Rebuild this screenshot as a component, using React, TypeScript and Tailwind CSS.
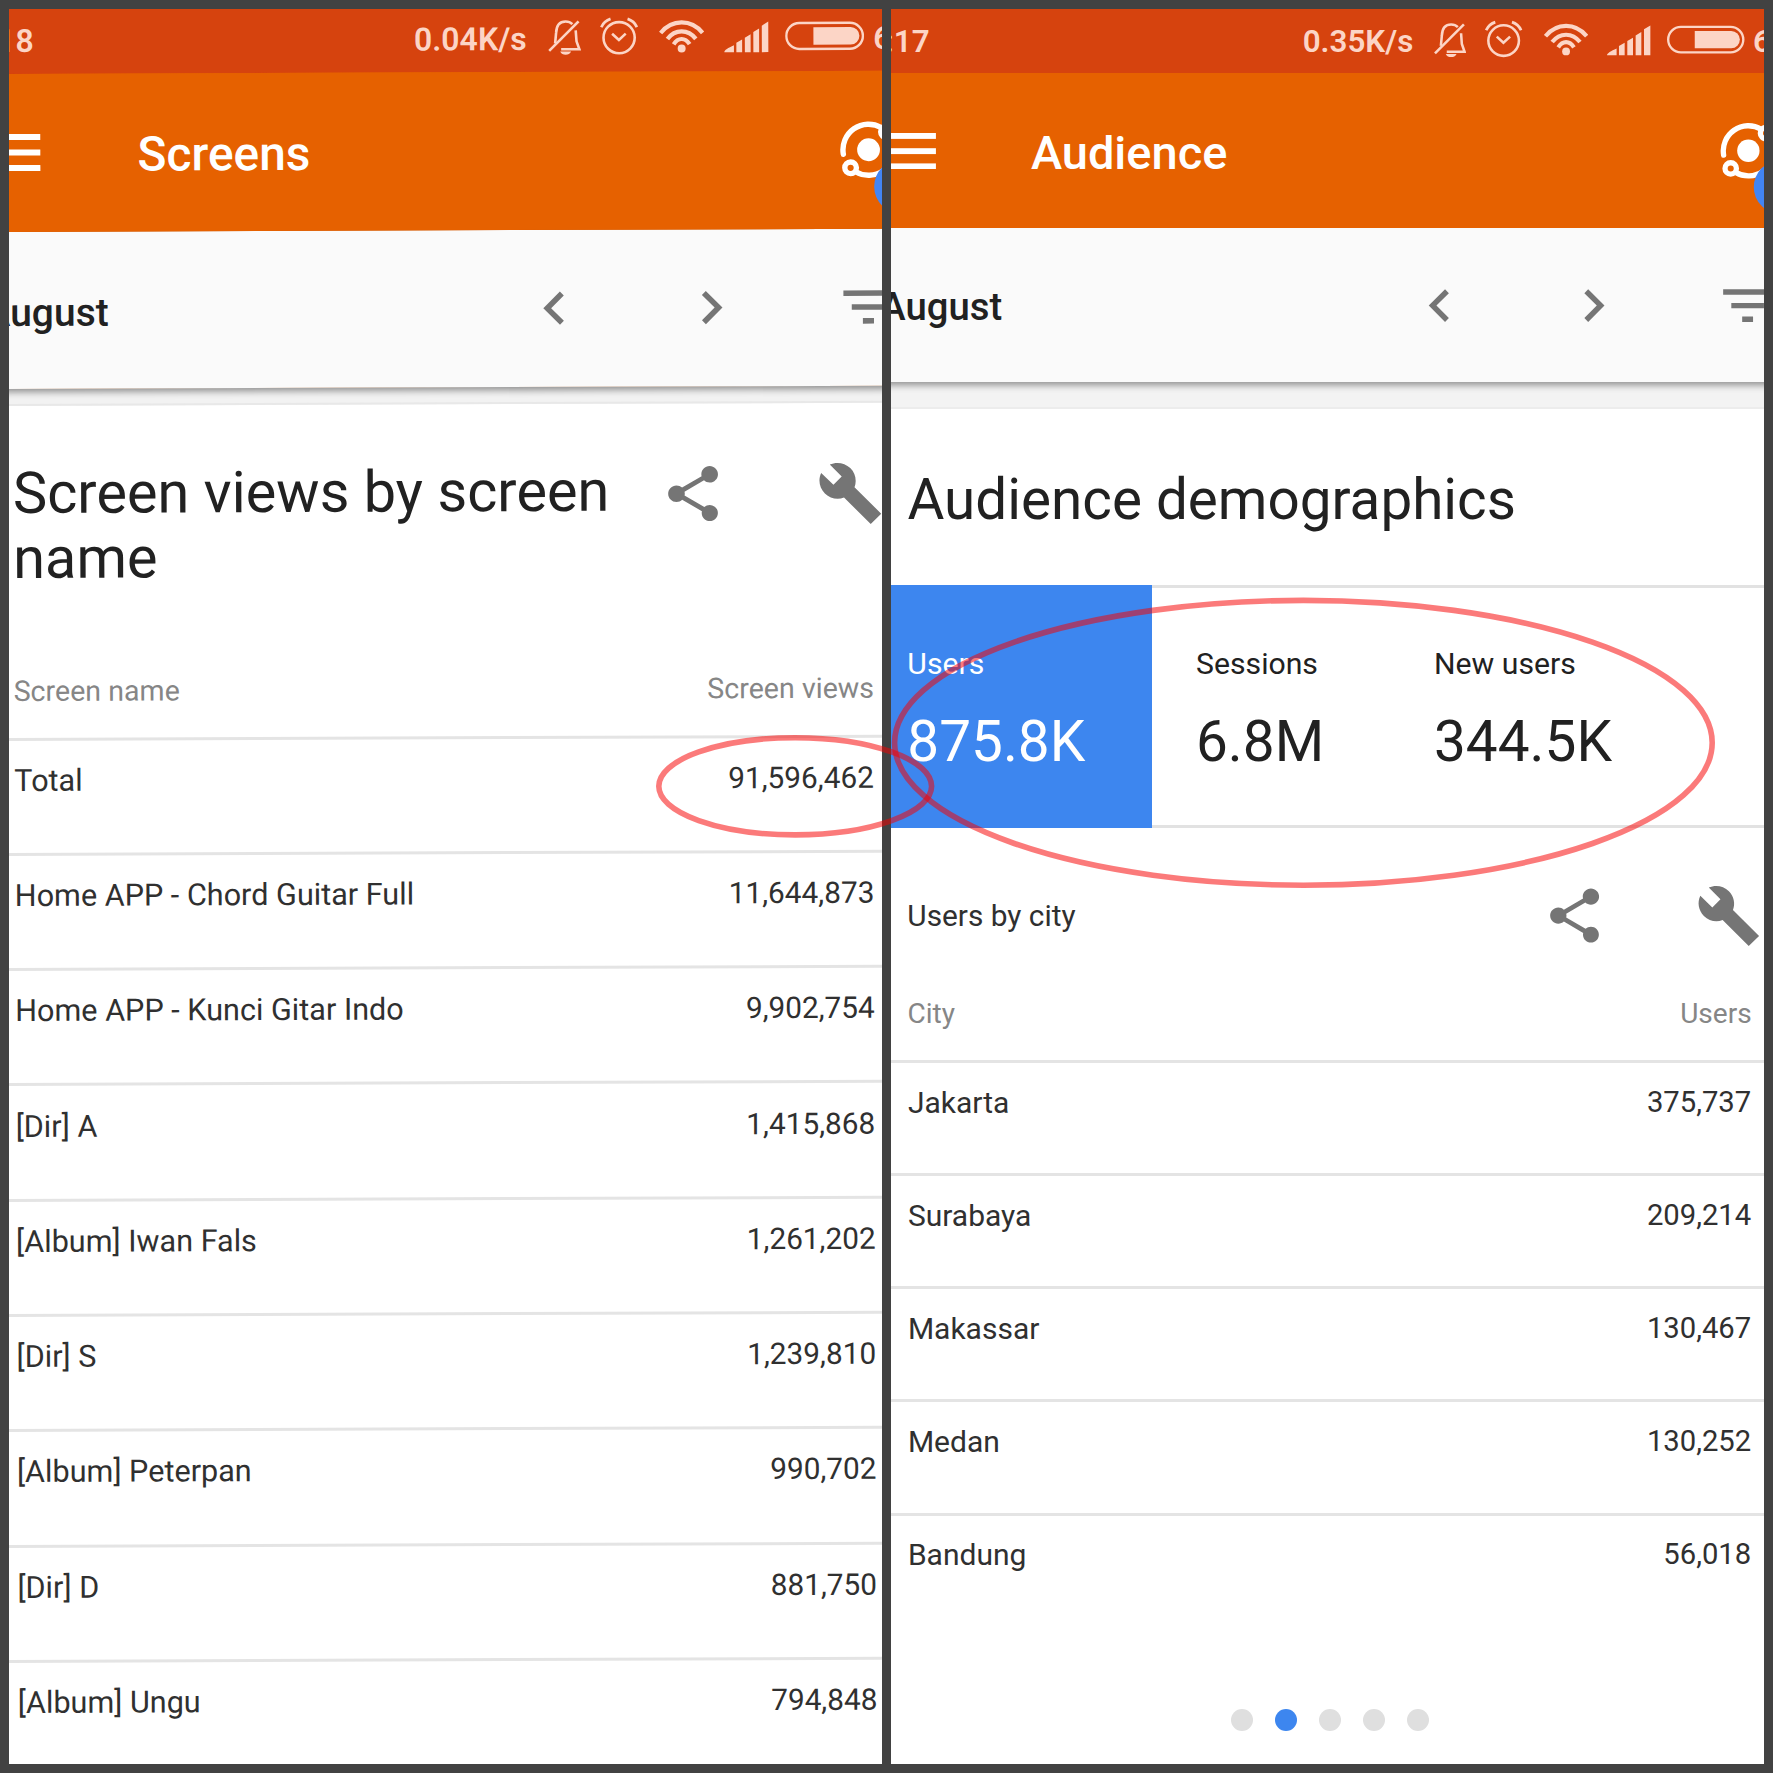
import React from "react";

type Row = [string, string];

const screenRows: Row[] = [
  ["Total", "91,596,462"],
  ["Home APP - Chord Guitar Full", "11,644,873"],
  ["Home APP - Kunci Gitar Indo", "9,902,754"],
  ["[Dir] A", "1,415,868"],
  ["[Album] Iwan Fals", "1,261,202"],
  ["[Dir] S", "1,239,810"],
  ["[Album] Peterpan", "990,702"],
  ["[Dir] D", "881,750"],
  ["[Album] Ungu", "794,848"],
];

const cityRows: Row[] = [
  ["Jakarta", "375,737"],
  ["Surabaya", "209,214"],
  ["Makassar", "130,467"],
  ["Medan", "130,252"],
  ["Bandung", "56,018"],
];

const BellOff = () => (
  <svg viewBox="0 0 33 40" fill="none" stroke="currentColor" strokeWidth="2.6" className="ml-[calc(18.4*var(--u))] h-[calc(40*var(--u))] w-[calc(33*var(--u))] shrink-0">
    <path d="M1 34 30.5 4.5" />
    <path d="M7 26.5 8 16C8.3 8.5 12 4.6 17.5 4.6c2.8 0 5 .8 6.8 2.6M27.6 13.5l.8 11 2.8 7.9H13" />
    <path d="M12 34.6h11c-1.2 2.4-3 3.2-5.5 3.2S13 37 12 34.6z" fill="currentColor" stroke="none" />
  </svg>
);

const Alarm = () => (
  <svg viewBox="0 0 38 40" fill="none" stroke="currentColor" className="ml-[calc(19.3*var(--u))] h-[calc(40*var(--u))] w-[calc(38*var(--u))] shrink-0">
    <circle cx="19" cy="21" r="15.6" strokeWidth="2.6" />
    <path d="M12 17l6.8 6.2L25.6 17" strokeWidth="2.6" />
    <path d="M1.2 10.5C3 6.5 6 3.6 10.5 2.2M27.5 2.2C32 3.6 35 6.5 36.8 10.5" strokeWidth="2.8" />
  </svg>
);

const Wifi = () => (
  <svg viewBox="0 0 45 40" fill="none" stroke="currentColor" strokeWidth="4.2" className="ml-[calc(21.5*var(--u))] h-[calc(40*var(--u))] w-[calc(45*var(--u))] shrink-0">
    <path d="M1.500 16.500C13 2.500 32 2.500 43.500 16.500" />
    <path d="M8.300 22.500C16 12.500 29 12.500 36.700 22.500" />
    <path d="M14.500 27.800C19 20.800 26 20.800 30.500 27.800" />
    <circle cx="22.5" cy="32" r="4" fill="currentColor" stroke="none" />
  </svg>
);

const Signal = () => (
  <svg viewBox="0 0 45 40" fill="currentColor" className="ml-[calc(20*var(--u))] h-[calc(40*var(--u))] w-[calc(45*var(--u))] shrink-0">
    <path d="M0 36c0-2 4-4.500 9.800-7v7zM12.200 26.500l5.800-3.300V36h-5.800zM20.700 21.500l5.800-3.500V36h-5.800zM29.200 15.800l5.800-3.500V36h-5.800zM37.700 9.500l6.500-4V36h-6.500z" />
  </svg>
);

const Battery = () => (
  <svg viewBox="0 0 79 40" fill="none" className="ml-[calc(16*var(--u))] h-[calc(40*var(--u))] w-[calc(79*var(--u))] shrink-0">
    <rect x="1.2" y="7" width="76.6" height="26" rx="13" stroke="currentColor" strokeWidth="2.4" />
    <path d="M28.300 11.200H65.500a8.800 8.800 0 0 1 0 17.600H28.300z" fill="currentColor" />
  </svg>
);

const Burger = () => (
  <svg viewBox="0 0 56 37" className="h-[calc(37*var(--u))] w-[calc(56*var(--u))] shrink-0 fill-white">
    <rect width="56" height="6" />
    <rect y="15.5" width="56" height="6" />
    <rect y="31" width="56" height="6" />
  </svg>
);

const RealTime = () => (
  <svg viewBox="-33 -64 94 128" fill="none" className="ml-auto h-[calc(128*var(--u))] w-[calc(94*var(--u))] shrink-0">
    <path d="M-25.200 4.500A25.600 25.600 0 0 1 13 -22" stroke="#fff" strokeWidth="5.4" strokeLinecap="round" />
    <path d="M-13 22A25.600 25.600 0 0 0 25.200 -4.500" stroke="#fff" strokeWidth="5.4" />
    <circle r="11.4" fill="#fff" />
    <circle cx="-18" cy="18" r="5.8" stroke="#fff" strokeWidth="5.4" fill="#e66100" />
    <circle cx="18" cy="-18" r="5.8" stroke="#fff" strokeWidth="5.4" fill="#e66100" />
    <circle cx="32.5" cy="37" r="27" fill="#4285f4" />
  </svg>
);

const Glyph = ({ d }: { d: string }) => (
  <svg viewBox="0 0 24 24" className="size-[calc(66.5*var(--u))] shrink-0 fill-[#757575]">
    <path d={d} />
  </svg>
);

const LEFT = "M15.410 7.410 14 6l-6 6 6 6 1.410-1.410L10.830 12z";
const RIGHT = "M10 6 8.590 7.410 13.170 12l-4.580 4.590L10 18l6-6z";
const FILTER = "M10 18h4v-2h-4v2zM3 6v2h18V6H3zm3 7h12v-2H6v2z";
const SHARE =
  "M18 16.080c-.76 0-1.440.3-1.960.77L8.910 12.700c.05-.23.09-.46.09-.7s-.04-.47-.09-.7l7.050-4.110c.54.5 1.250.81 2.040.81 1.660 0 3-1.340 3-3s-1.340-3-3-3-3 1.340-3 3c0 .24.04.47.09.7L8.040 9.810C7.500 9.310 6.790 9 6 9c-1.660 0-3 1.340-3 3s1.340 3 3 3c.79 0 1.500-.31 2.040-.81l7.120 4.160c-.05.21-.08.43-.08.65 0 1.610 1.310 2.920 2.920 2.920s2.920-1.310 2.920-2.920-1.310-2.920-2.920-2.920z";
const WRENCH =
  "M23.200 19.500l-9.600-9.600c.9-2.300.4-5-1.500-6.900-2-2-5-2.400-7.400-1.300L9 6 6 9 1.600 4.700C.4 7.100.9 10.100 2.900 12.100c1.900 1.900 4.600 2.400 6.900 1.500l9.600 9.600z";

const Actions = () => (
  <div className="flex gap-[calc(90.5*var(--u))]">
    <Glyph d={SHARE} />
    <Glyph d={WRENCH} />
  </div>
);

function Chrome({ time, speed, title }: { time: string; speed: string; title: string }) {
  return (
    <div className="shrink-0 bg-[#e66100]">
      <div className="flex h-[calc(65*var(--u))] items-center bg-[#d6430e] pb-[calc(5*var(--u))] text-[length:calc(32*var(--u))] font-semibold whitespace-nowrap text-[#fcd5c6]">
        <span className="w-[calc(64.5*var(--u))] shrink-0 pt-[calc(4.5*var(--u))] text-right">{time}</span>
        <span className="ml-[calc(380.3*var(--u))] w-[calc(115.5*var(--u))] shrink-0 pt-[calc(4*var(--u))]">{speed}</span>
        <BellOff />
        <Alarm />
        <Wifi />
        <Signal />
        <Battery />
        <span className="ml-[calc(8.5*var(--u))] pt-[calc(4*var(--u))]">6</span>
      </div>
      <div className="relative z-20 flex h-[calc(157.5*var(--u))] items-center bg-[#e66100] pl-[calc(15*var(--u))]">
        <Burger />
        <h1 className="ml-[calc(96.8*var(--u))] pt-[calc(5.5*var(--u))] text-[length:calc(47.9*var(--u))] font-medium text-white">{title}</h1>
        <RealTime />
      </div>
      <div className="relative z-10 flex h-[calc(157.5*var(--u))] items-center bg-[#fafafa] shadow-[0_2px_7px_1px_rgba(0,0,0,0.42)]">
        <span className="w-[calc(138.5*var(--u))] shrink-0 pt-[calc(5*var(--u))] text-right text-[length:calc(39*var(--u))] font-medium text-[#212121]">August</span>
        <div className="ml-[calc(412.6*var(--u))] flex gap-[calc(90.5*var(--u))]">
          <Glyph d={LEFT} />
          <Glyph d={RIGHT} />
          <Glyph d={FILTER} />
        </div>
      </div>
    </div>
  );
}

function Table({ head, rows }: { head: Row; rows: Row[] }) {
  return (
    <div className="leading-[calc(40*var(--u))] text-[#303030]">
      <div className="flex h-[calc(67*var(--u))] justify-between pr-[calc(57.5*var(--u))] pl-[calc(42*var(--u))] text-[length:calc(28.6*var(--u))] text-[#868686]">
        <span>{head[0]}</span>
        <span>{head[1]}</span>
      </div>
      {rows.map(([name, value]) => (
        <div key={name} className="flex h-[calc(115.3*var(--u))] justify-between border-t-[3px] border-[#e4e4e4] pt-[calc(20.2*var(--u))] pr-[calc(58*var(--u))] pl-[calc(42.4*var(--u))]">
          <span className="text-[length:calc(30.6*var(--u))]">{name}</span>
          <span className="text-[length:calc(29.8*var(--u))]">{value}</span>
        </div>
      ))}
    </div>
  );
}

const Stat = ({ label, value }: { label: string; value: string }) => (
  <>
    <div className="text-[length:calc(30.8*var(--u))] leading-[40px]">{label}</div>
    <div className="mt-[28px] text-[length:calc(57.8*var(--u))] leading-[60px]">{value}</div>
  </>
);

export default function App() {
  return (
    <div className="relative grid h-[1773px] w-[1773px] grid-cols-2 gap-[9px] overflow-hidden bg-[#424242] p-[9px] font-[Roboto,sans-serif]">
      <section className="h-[1755px] overflow-hidden bg-white [--u:1px]">
        <div className="-ml-[40px] h-[1780px] w-[960px] origin-[40px_0] -rotate-[0.218deg] bg-white">
          <Chrome time="6:18" speed="0.04K/s" title="Screens" />
          <div className="h-[17px] border-b-2 border-[#e8e8e8] bg-[#f2f2f2]" />
          <div className="flex h-[264.5px] pt-[54.7px] pl-[42px]">
            <h2 className="w-[646.5px] shrink-0 text-[57.7px] leading-[65px] whitespace-nowrap text-[#212121]">
              Screen views by screen
              <br />
              name
            </h2>
            <div className="pt-[2px]">
              <Actions />
            </div>
          </div>
          <Table head={["Screen name", "Screen views"]} rows={screenRows} />
        </div>
      </section>

      <section className="h-[1755px] overflow-hidden bg-[#d6430e] pt-[0.7px] [--u:0.981px]">
        <div className="-ml-[24.7px] flex h-[1756px] w-[calc(960*var(--u))] flex-col bg-white">
          <Chrome time="6:17" speed="0.35K/s" title="Audience" />
          <div className="h-[26.5px] shrink-0 border-b-2 border-[#ececec] bg-[#f3f3f3]" />
          <h2 className="h-[176px] shrink-0 pt-[58.8px] pl-[calc(42*var(--u))] text-[length:calc(57.7*var(--u))] leading-[64px] text-[#212121]">
            Audience demographics
          </h2>
          <div className="flex h-[243px] shrink-0 text-[#212121]">
            <div className="w-[285.7px] bg-[#3d86ef] pt-[59.5px] pl-[41px] text-white">
              <Stat label="Users" value="875.8K" />
            </div>
            <div className="flex grow border-y-[3px] border-[#e2e2e2] pt-[56.5px] pl-[44px]">
              <div className="w-[238px]">
                <Stat label="Sessions" value="6.8M" />
              </div>
              <div>
                <Stat label="New users" value="344.5K" />
              </div>
            </div>
          </div>
          <div className="flex h-[166.5px] shrink-0 items-start pt-[55.5px] pl-[41px] text-[#303030]">
            <span className="w-[635px] shrink-0 text-[length:calc(30.4*var(--u))] leading-[66px]">Users by city</span>
            <Actions />
          </div>
          <Table head={["City", "Users"]} rows={cityRows} />
          <div className="mt-auto mb-[34.5px] flex justify-center gap-[22.1px] pr-[15px]">
            <i className="size-[22px] rounded-full bg-[#dfdfdf]" />
            <i className="size-[22px] rounded-full bg-[#3d86ef]" />
            <i className="size-[22px] rounded-full bg-[#dfdfdf]" />
            <i className="size-[22px] rounded-full bg-[#dfdfdf]" />
            <i className="size-[22px] rounded-full bg-[#dfdfdf]" />
          </div>
        </div>
      </section>

      {/* highlight rings drawn over both screens */}
      <svg viewBox="0 0 1773 1773" fill="none" stroke="#f80000" strokeOpacity="0.52" strokeWidth="5.6" className="pointer-events-none absolute inset-0 z-20 size-full">
        <ellipse cx="795.2" cy="786.3" rx="136.4" ry="48.6" />
        <ellipse cx="1303.4" cy="742.8" rx="408.8" ry="142.4" />
      </svg>
    </div>
  );
}
